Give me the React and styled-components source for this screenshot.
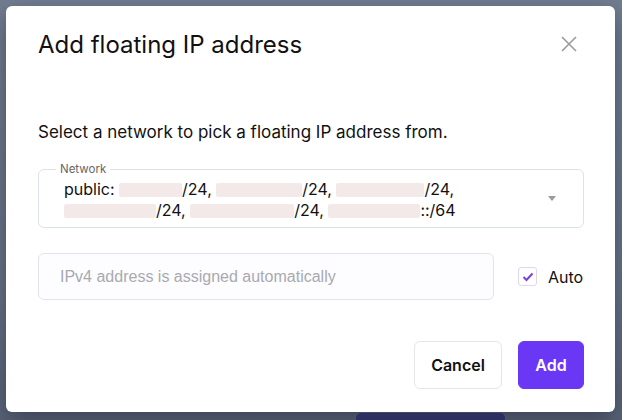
import React, { useState } from "react";
import styled, { createGlobalStyle } from "styled-components";

const GlobalStyle = createGlobalStyle`
    html, body {
        margin: 0;
        padding: 0;
        background: #6c778b;
        font-family: Inter, "Noto Sans", sans-serif;
        color: #111;
        overflow: hidden;
    }
`;

const Page = styled.div`
    width: 622px;
    height: 420px;
    padding: 6px 0 0 6px;
    box-sizing: border-box;
    display: flex;
    flex-direction: column;
    background: linear-gradient(180deg, #737e92 0%, #687387 70%, #5a6478 100%);
`;

const Dialog = styled.div`
    flex-shrink: 0;
    width: 609px;
    height: 406px;
    box-sizing: border-box;
    background: #fff;
    border-radius: 6px;
    box-shadow: 0 8px 24px rgba(20, 24, 40, 0.45);
    padding: 24px 31px 23px 32px;
    display: flex;
    flex-direction: column;
`;

const Header = styled.div`
    display: flex;
    align-items: center;
    justify-content: space-between;
    height: 28px;
`;

const Title = styled.h2`
    margin: 0;
    font-size: 24px;
    font-weight: 400;
    color: #111;
`;

const CloseButton = styled.button`
    border: none;
    background: none;
    padding: 0;
    margin-right: 6px;
    width: 18px;
    height: 18px;
    display: flex;
    align-items: center;
    justify-content: center;
    cursor: pointer;
`;

const Description = styled.p`
    margin: 64px 0 0;
    font-size: 17px;
    line-height: 20px;
    color: #111;
`;

const NetworkField = styled.fieldset`
    margin: 21px 0 0;
    padding: 0 24px 6px 25px;
    height: 65px;
    box-sizing: border-box;
    border: 1px solid #dde1ea;
    border-radius: 6px;
    position: relative;
`;

const Legend = styled.legend`
    margin-left: -8px;
    padding: 0 4px;
    font-size: 11.5px;
    line-height: 12px;
    color: #666;
`;

const NetworkText = styled.div`
    font-size: 16px;
    line-height: 21px;
    color: #111;
    margin-top: 4px;
    padding-right: 40px;
`;

const Hidden = styled.span`
    display: inline-block;
    width: ${(p) => p.w}px;
    height: 14px;
    vertical-align: -2px;
    background: #f4e9e9;
    border-radius: 2px;
`;

const Caret = styled.span`
    position: absolute;
    right: 27px;
    top: 21px;
    width: 0;
    height: 0;
    border-left: 4px solid transparent;
    border-right: 4px solid transparent;
    border-top: 5px solid #9a9a9a;
`;

const AddressRow = styled.div`
    margin-top: 25px;
    display: flex;
    align-items: center;
    gap: 24px;
`;

const AddressInput = styled.input`
    width: 456px;
    height: 47px;
    box-sizing: border-box;
    border: 1px solid #e3e3ee;
    border-radius: 6px;
    background: #fdfdff;
    padding: 0 21px;
    font-family: "Liberation Sans", Arial, sans-serif;
    font-size: 16px;
    outline: none;

    &::placeholder {
        color: #a9a9af;
    }
`;

const AutoLabel = styled.label`
    display: flex;
    align-items: center;
    gap: 11px;
    font-size: 16px;
    color: #111;
    cursor: pointer;
`;

const CheckBox = styled.span`
    width: 19px;
    height: 19px;
    box-sizing: border-box;
    border: 1px solid #dcd7f3;
    border-radius: 3px;
    background: #fff;
    display: flex;
    align-items: center;
    justify-content: center;
`;

const Footer = styled.div`
    margin-top: auto;
    display: flex;
    justify-content: flex-end;
    gap: 16px;
`;

const Button = styled.button`
    height: 48px;
    min-width: ${(p) => (p.primary ? 66 : 88)}px;
    padding: 0 16px;
    border-radius: 6px;
    font-family: Inter, "Noto Sans", sans-serif;
    font-size: 16px;
    font-weight: 600;
    cursor: pointer;
    border: 1px solid ${(p) => (p.primary ? "#6a38f5" : "#e6e6e6")};
    background: ${(p) => (p.primary ? "#6a38f5" : "#fff")};
    color: ${(p) => (p.primary ? "#fff" : "#111")};
`;

const BehindButton = styled.div`
    flex-shrink: 0;
    margin: 1px 0 0 350px;
    width: 149px;
    height: 8px;
    border-radius: 5px 5px 0 0;
    background: #2c3061;
`;

function App() {
    const [auto, setAuto] = useState(true);

    return (
        <>
            <GlobalStyle />
            <Page>
                <Dialog>
                    <Header>
                        <Title>Add floating IP address</Title>
                        <CloseButton aria-label="Close">
                            <svg width="16" height="16" viewBox="0 0 16 16">
                                <path d="M1 1L15 15M15 1L1 15" stroke="#9b9b9b" strokeWidth="1.6" />
                            </svg>
                        </CloseButton>
                    </Header>

                    <Description>Select a network to pick a floating IP address from.</Description>

                    <NetworkField>
                        <Legend>Network</Legend>
                        <NetworkText>
                            public: <Hidden w={63} />/24, <Hidden w={86} />/24, <Hidden w={88} />/24,{" "}
                            <Hidden w={92} />/24, <Hidden w={104} />/24, <Hidden w={92} />::/64
                        </NetworkText>
                        <Caret />
                    </NetworkField>

                    <AddressRow>
                        <AddressInput placeholder="IPv4 address is assigned automatically" disabled={auto} />
                        <AutoLabel onClick={() => setAuto(!auto)}>
                            <CheckBox>
                                {auto && (
                                    <svg width="12" height="10" viewBox="0 0 12 10">
                                        <path d="M1.5 5L4.5 8L10.5 1.5" fill="none" stroke="#7b3fe4" strokeWidth="2" />
                                    </svg>
                                )}
                            </CheckBox>
                            Auto
                        </AutoLabel>
                    </AddressRow>

                    <Footer>
                        <Button>Cancel</Button>
                        <Button primary>Add</Button>
                    </Footer>
                </Dialog>
                <BehindButton />
            </Page>
        </>
    );
}

export default App;
